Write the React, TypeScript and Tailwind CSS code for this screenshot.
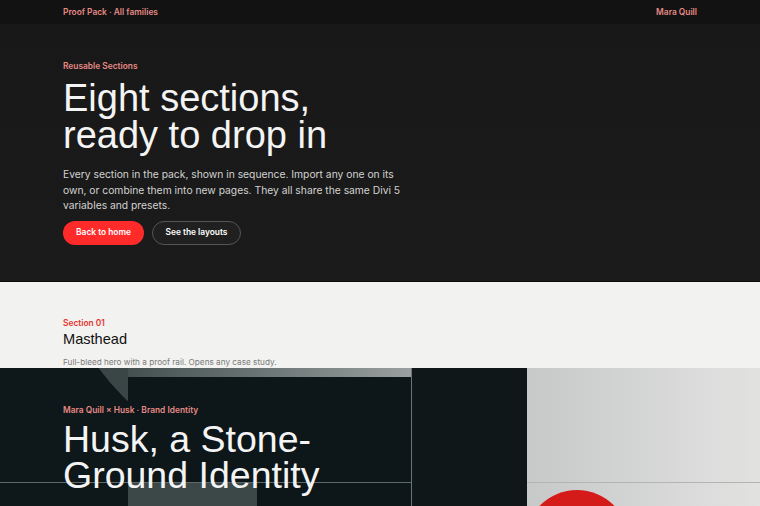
import React from "react";

export default function App() {
  const sans = { fontFamily: "Inter, 'Noto Sans', sans-serif" };
  const head = { fontFamily: "'Liberation Sans', Arial, sans-serif" };
  return (
    <div className="w-[760px] h-[506px] overflow-hidden" style={sans}>
      {/* top bar */}
      <div className="h-[24px] bg-[#121212] flex items-center justify-between px-[63px]">
        <span className="text-[8.4px] font-semibold text-[#e58a86]">Proof Pack · All families</span>
        <span className="text-[8.4px] font-semibold text-[#e58a86]">Mara Quill</span>
      </div>
      {/* hero */}
      <div className="bg-gradient-to-b from-[#181818] to-[#1b1b1b] pl-[63px] pt-[36px] pb-[36px] border-b border-[#0c0c0c]">
        <div className="text-[8.4px] leading-[12px] font-semibold text-[#e58a86]">Reusable Sections</div>
        <h1 className="mt-[8px] text-[38px] leading-[37px] text-[#f4f4f4]" style={head}>
          Eight sections,
          <br />
          ready to drop in
        </h1>
        <p className="mt-[13px] w-[345px] text-[10.3px] leading-[15.5px] text-[#d2d2d2]">
          Every section in the pack, shown in sequence. Import any one on its own, or combine them into new pages. They all share the same Divi 5 variables and presets.
        </p>
        <div className="mt-[7px] flex gap-[8px]">
          <button className="h-[24px] w-[81px] rounded-full bg-[#ff2b2b] text-[8.4px] font-semibold text-white">Back to home</button>
          <button className="h-[24px] w-[89px] rounded-full bg-[#202020] border border-[#555] text-[8.4px] font-semibold text-white">See the layouts</button>
        </div>
      </div>
      {/* section label */}
      <div className="h-[86px] overflow-hidden bg-[#f2f2f0] pl-[63px] pt-[35px]">
        <div className="text-[8.4px] leading-[12px] font-semibold text-[#e5322f]">Section 01</div>
        <div className="mt-[1px] text-[14.6px] leading-[18px] text-[#111]" style={head}>Masthead</div>
        <div className="mt-[8px] text-[8.2px] leading-[12px] text-[#7a7a7a]">Full-bleed hero with a proof rail. Opens any case study.</div>
      </div>
      {/* case study masthead */}
      <div className="flex h-[138px] overflow-hidden bg-[#0e1719]">
        {/* left canvas with text */}
        <div className="relative w-[412px] shrink-0 overflow-hidden border-r border-[#6b7575]">
          <div className="absolute left-[50px] top-[-398px] w-[500px] h-[500px] rounded-full bg-[#3a4546]" />
          <div className="absolute left-[128px] top-0 right-0 h-[9px] bg-gradient-to-r from-[#445050] to-[#9aa0a0]" />
          <div className="absolute left-[128px] top-[9px] right-0 bottom-0 bg-[#0d1618]" />
          <div className="absolute left-[128px] top-[115px] w-[129px] bottom-0 bg-[#3c4747]" />
          <div className="absolute left-0 right-0 top-[114px] h-px bg-[#5d6868]" />
          <div className="relative pl-[63px] pt-[36px]">
            <div className="text-[8.4px] leading-[12px] font-semibold text-[#e58a86]">Mara Quill × Husk · Brand Identity</div>
            <h2 className="mt-[5px] text-[37.5px] leading-[36px] text-[#f4f4f4] whitespace-nowrap" style={head}>
              Husk, a Stone-
              <br />
              Ground Identity
            </h2>
          </div>
        </div>
        {/* dark column */}
        <div className="w-[115px] shrink-0 bg-[#101718]" />
        {/* light panel */}
        <div className="relative flex-1 overflow-hidden bg-gradient-to-r from-[#c6c9c8] to-[#e2e2e1]">
          <div className="mt-[114px] h-px bg-[#b3b5b4]" />
          <div className="absolute left-[-2px] top-[122px] w-[104px] h-[104px] rounded-full bg-[#d51a1a]" />
        </div>
      </div>
    </div>
  );
}
